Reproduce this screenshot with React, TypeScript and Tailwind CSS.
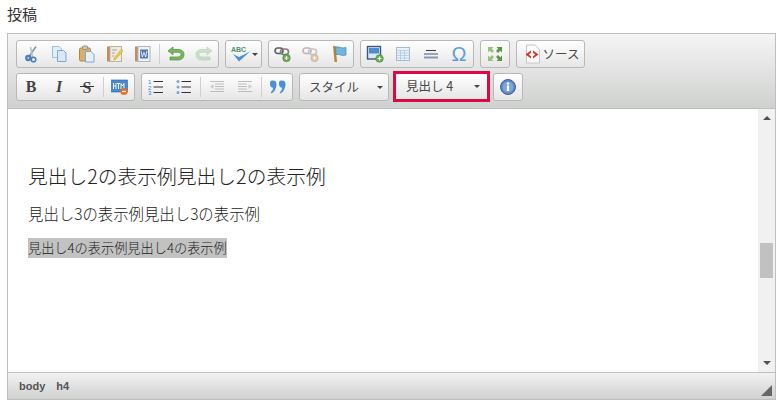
import React from "react";

const Cut = () => (
  <svg width="18" height="18" viewBox="0 0 18 18">
    <path d="M14 1.5 L7.5 11" stroke="#8494a4" strokeWidth="1.5" />
    <path d="M8.5 2 L10.5 12" stroke="#b3bcc6" strokeWidth="1.5" />
    <circle cx="6.3" cy="13" r="3.2" fill="#4a80b6" />
    <circle cx="6.3" cy="13" r="1" fill="#bcd3e8" />
    <circle cx="11.5" cy="14.5" r="2.3" fill="none" stroke="#4a80b6" strokeWidth="1.6" />
  </svg>
);

const Copy = () => (
  <svg width="18" height="18" viewBox="0 0 18 18">
    <path d="M2.5 1.5 H9 L11.5 4 V12.5 H2.5 Z" fill="#e2eef9" stroke="#9bbddb" />
    <path d="M7.5 5.5 H13.5 L16 8 V16.5 H7.5 Z" fill="#d8e8f7" stroke="#7ba8cf" />
  </svg>
);

const Paste = () => (
  <svg width="18" height="18" viewBox="0 0 18 18">
    <rect x="1.5" y="3" width="11" height="13" rx="1.5" fill="#dcae68" stroke="#b3833c" />
    <rect x="4.5" y="1" width="5" height="3.5" rx="1" fill="#cfc9bb" stroke="#978d78" />
    <path d="M7.5 6.5 H13 L16 9.5 V17 H7.5 Z" fill="#e6f0fa" stroke="#7ba8cf" />
  </svg>
);

const PasteText = () => (
  <svg width="18" height="18" viewBox="0 0 18 18">
    <rect x="1" y="1.5" width="3" height="15" fill="#c08a62" />
    <rect x="4" y="1.5" width="11.5" height="15" fill="#f0ebdf" stroke="#bcb19d" />
    <path d="M6 5 H11 M6 8 H9 M6 11 H8" stroke="#a7a7a7" />
    <path d="M15.5 4 L8.5 12.5 L7.5 15 L10 14 L17 6 Z" fill="#eccb52" stroke="#cfa43a" strokeWidth="0.6" />
  </svg>
);

const Word = () => (
  <svg width="18" height="18" viewBox="0 0 18 18">
    <rect x="1" y="1.5" width="3" height="15" fill="#c48c66" />
    <rect x="4" y="1.5" width="12" height="15" fill="#eef1f6" stroke="#adb6c9" />
    <rect x="6" y="4.5" width="8" height="9" fill="#5678b8" />
    <path d="M7 6 L8.3 12 L10 7.5 L11.7 12 L13 6" stroke="#ffffff" strokeWidth="0.8" fill="none" />
  </svg>
);

const Undo = ({ flip, color, edge }: any) => (
  <svg width="18" height="18" viewBox="0 0 18 18" className={flip ? "-scale-x-100" : ""}>
    <path
      d="M6 2 V4.5 H11 C15 4.5 17 6.5 17 9.5 C17 12.7 15 15 11 15 H3 V12 H11 C12.8 12 14 11 14 9.5 C14 8.1 12.8 7.3 11 7.3 H6 V9.8 L1 5.9 Z"
      fill={color}
      stroke={edge}
      strokeWidth="0.7"
    />
  </svg>
);

const Spell = () => (
  <svg width="21" height="18" viewBox="0 0 21 18">
    <text x="1" y="6.5" fontSize="7" fontWeight="700" fill="#4f9163" fontFamily="Liberation Sans">ABC</text>
    <path d="M3 9 L9 16.5 L20 6.5 L9 12 Z" fill="#4a90d4" />
  </svg>
);

const LinkIcon = ({ faded, badge }: any) => (
  <svg width="18" height="18" viewBox="0 0 18 18" opacity={faded ? 0.4 : 1}>
    <rect x="1" y="3" width="8" height="5.5" rx="2.7" fill="none" stroke="#5d5d5d" strokeWidth="1.7" />
    <rect x="6.5" y="4" width="8" height="5.5" rx="2.7" fill="none" stroke="#808080" strokeWidth="1.7" />
    <circle cx="12.5" cy="13" r="3.8" fill={badge} stroke="#4a7c35" strokeWidth="0.5" />
    <path d="M10.5 13 H14.5 M12.5 11 V15" stroke="#ffffff" strokeWidth="1.2" />
  </svg>
);

const Anchor = () => (
  <svg width="18" height="18" viewBox="0 0 18 18">
    <path d="M3 1 L5.5 1 L7 17 L4.5 17 Z" fill="#bd8438" />
    <path d="M5.5 2 C9 1 11 4 16 2.5 V10 C11 11.5 9 8.5 6 9.5 Z" fill="#74b6de" stroke="#3d85b3" strokeWidth="0.7" />
  </svg>
);

const ImageIcon = () => (
  <svg width="18" height="18" viewBox="0 0 18 18">
    <rect x="1.5" y="1.5" width="13" height="12.5" fill="#dce8f4" stroke="#3f5877" strokeWidth="1.4" />
    <rect x="3" y="3" width="10" height="5.5" fill="#4a8fcb" />
    <circle cx="13.5" cy="13.5" r="3.8" fill="#68ae50" stroke="#3f7c2d" strokeWidth="0.5" />
    <path d="M11.5 13.5 H15.5 M13.5 11.5 V15.5" stroke="#ffffff" strokeWidth="1.2" />
  </svg>
);

const TableIcon = () => (
  <svg width="18" height="18" viewBox="0 0 18 18">
    <rect x="2.5" y="2.5" width="13" height="13" fill="#eaf2fa" stroke="#9dbcd9" />
    <path d="M2.5 5.5 H15.5 M2.5 8 H15.5 M2.5 10.5 H15.5 M2.5 13 H15.5 M6.5 5.5 V15.5 M10.5 5.5 V15.5" stroke="#adc6de" strokeWidth="0.8" />
  </svg>
);

const Rule = () => (
  <svg width="18" height="18" viewBox="0 0 18 18">
    <path d="M4 5.5 H14" stroke="#444" strokeWidth="1.1" />
    <path d="M2 9 H16" stroke="#5a6f86" strokeWidth="1.2" />
    <path d="M2 12.5 H16" stroke="#7f9cb8" strokeWidth="2" />
  </svg>
);

const Maximize = () => (
  <svg width="18" height="18" viewBox="0 0 18 18" fill="#6aa84f">
    <path d="M2 2 H7.5 L5.8 3.8 L8 6 L6 8 L3.8 5.8 L2 7.5 Z" fill="#94c47a" />
    <path d="M16 2 V7.5 L14.2 5.8 L12 8 L10 6 L12.2 3.8 L10.5 2 Z" fill="#5c9544" />
    <path d="M2 16 V10.5 L3.8 12.2 L6 10 L8 12 L5.8 14.2 L7.5 16 Z" fill="#94c47a" />
    <path d="M16 16 H10.5 L12.2 14.2 L10 12 L12 10 L14.2 12.2 L16 10.5 Z" fill="#5c9544" />
  </svg>
);

const Source = () => (
  <svg width="20" height="20" viewBox="0 0 20 20">
    <path d="M4.5 1 H13 L17.5 5.5 V19 H4.5 Z" fill="#fbfbfb" stroke="#c6c6c6" />
    <path d="M9 6.5 L3.5 10.5 L9 14.5 V12.2 L6.7 10.5 L9 8.8 Z" fill="#d8322a" />
    <path d="M11 6.5 L16.5 10.5 L11 14.5 V12.2 L13.3 10.5 L11 8.8 Z" fill="#d8322a" />
  </svg>
);

const Html = () => (
  <svg width="18" height="18" viewBox="0 0 18 18">
    <rect x="0.5" y="2" width="16" height="12" fill="#4a88cc" stroke="#2c619e" strokeWidth="0.6" />
    <path d="M2.5 5 V11 M5 5 V11 M2.5 8 H5 M6 5.5 H9 M7.5 5.5 V11 M10 11 V5.5 L11.5 8 L13 5.5 V11" stroke="#ffffff" strokeWidth="0.9" fill="none" />
    <circle cx="13" cy="13.5" r="3.6" fill="#e8702a" />
    <path d="M11 13.5 H15" stroke="#ffffff" strokeWidth="1.2" />
  </svg>
);

const ListNum = () => (
  <svg width="18" height="18" viewBox="0 0 18 18">
    <text x="1" y="6" fontSize="6" fill="#3c82c8" fontFamily="Liberation Sans">1</text>
    <text x="1" y="11.5" fontSize="6" fill="#3c82c8" fontFamily="Liberation Sans">2</text>
    <text x="1" y="17" fontSize="6" fill="#3c82c8" fontFamily="Liberation Sans">3</text>
    <path d="M6.5 3.5 H16 M6.5 9 H16 M6.5 14.5 H16" stroke="#333" strokeWidth="1.1" />
  </svg>
);

const ListBullet = () => (
  <svg width="18" height="18" viewBox="0 0 18 18">
    <circle cx="3" cy="3.5" r="1.5" fill="#7aa6cf" />
    <circle cx="3" cy="9" r="1.5" fill="#7aa6cf" />
    <circle cx="3" cy="14.5" r="1.5" fill="#7aa6cf" />
    <path d="M6.5 3.5 H16 M6.5 9 H16 M6.5 14.5 H16" stroke="#333" strokeWidth="1.1" />
  </svg>
);

const Indent = ({ flip }: any) => (
  <svg width="18" height="18" viewBox="0 0 18 18" className={flip ? "-scale-x-100" : ""}>
    <path d="M2 3.5 H16 M7 6 H16 M7 8.5 H16 M7 11 H16 M2 13.5 H16" stroke="#bdbdbd" strokeWidth="1" />
    <path d="M5.5 6 L2 8.5 L5.5 11 Z" fill="#c3ced8" />
  </svg>
);

const Quote = () => (
  <svg width="18" height="18" viewBox="0 0 18 18" fill="#4a90d9">
    <path d="M1 4.5 C1 3 2.3 2.5 4 2.5 C6 2.5 7.5 3.5 7.5 6 C7.5 10 5.5 14 2.5 15.5 L1.8 14.5 C3.3 13 4 11.5 4.1 9.8 C2.3 9.8 1 8 1 6 Z" />
    <path d="M10 4.5 C10 3 11.3 2.5 13 2.5 C15 2.5 16.5 3.5 16.5 6 C16.5 10 14.5 14 11.5 15.5 L10.8 14.5 C12.3 13 13 11.5 13.1 9.8 C11.3 9.8 10 8 10 6 Z" />
  </svg>
);

const Info = () => (
  <svg width="18" height="18" viewBox="0 0 18 18">
    <circle cx="9" cy="9" r="7.5" fill="#5b86c4" stroke="#3d639c" />
    <circle cx="9" cy="9" r="5.5" fill="#7ea4d8" />
    <circle cx="9" cy="5.5" r="1.2" fill="#ffffff" />
    <rect x="7.9" y="7.5" width="2.2" height="5.5" fill="#ffffff" />
  </svg>
);

const Btn = ({ children }: any) => (
  <div className="flex h-[26px] w-[28px] items-center justify-center">{children}</div>
);

const Sep = () => (
  <div className="flex h-[26px] w-[5px] items-center justify-center">
    <div className="h-[20px] w-px bg-[#cfcfcf]" />
  </div>
);

const Group = ({ children, className = "" }: any) => (
  <div
    className={`flex h-[28px] items-center rounded-[3px] border border-[#b8b8b8] bg-gradient-to-b from-[#ffffff] to-[#e6e6e6] ${className}`}
  >
    {children}
  </div>
);

const Caret = () => (
  <div className="h-0 w-0 border-x-[3px] border-t-[3px] border-x-transparent border-t-[#444]" />
);

export default function App() {
  return (
    <div className="h-[412px] w-[783px] overflow-hidden bg-white px-[7px] pt-[4px] font-['Noto_Sans_CJK_JP','Liberation_Sans',sans-serif]">
      <div className="h-[29px] text-[15px] leading-[20px] text-[#333]">投稿</div>
      <div className="flex h-[367px] w-[769px] flex-col border border-[#bfbfbf]">
        <div className="flex h-[75px] shrink-0 flex-col gap-[5px] border-b border-[#bfbfbf] bg-gradient-to-b from-[#f5f5f5] to-[#cfd1cf] pl-[8px] pt-[6px]">
          <div className="flex gap-[6px]">
            <Group>
              <Btn><Cut /></Btn>
              <Btn><Copy /></Btn>
              <Btn><Paste /></Btn>
              <Btn><PasteText /></Btn>
              <Btn><Word /></Btn>
              <Sep />
              <Btn><Undo color="#78b662" edge="#4d8f38" /></Btn>
              <Btn><div className="opacity-40"><Undo flip color="#8fc08a" edge="#6ea36a" /></div></Btn>
            </Group>
            <Group className="w-[37px] justify-center gap-[1px]">
              <Spell />
              <Caret />
            </Group>
            <Group>
              <Btn><LinkIcon badge="#62a84a" /></Btn>
              <Btn><LinkIcon faded badge="#d9773a" /></Btn>
              <Btn><Anchor /></Btn>
            </Group>
            <Group>
              <Btn><ImageIcon /></Btn>
              <Btn><TableIcon /></Btn>
              <Btn><Rule /></Btn>
              <Btn><span className="font-['Liberation_Sans',sans-serif] text-[20px] leading-none text-[#5b9bdc]">Ω</span></Btn>
            </Group>
            <Group className="w-[30px] justify-center">
              <Maximize />
            </Group>
            <Group className="w-[69px] justify-center gap-[1px]">
              <Source />
              <span className="text-[12.5px] text-[#484848]">ソース</span>
            </Group>
          </div>
          <div className="flex">
            <Group>
              <Btn><span className="font-['Liberation_Serif',serif] text-[16px] font-bold text-[#444]">B</span></Btn>
              <Btn><span className="font-['Liberation_Serif',serif] text-[16px] font-bold italic text-[#444]">I</span></Btn>
              <Btn>
                <div className="relative">
                  <span className="font-['Liberation_Serif',serif] text-[16px] font-bold text-[#444]">S</span>
                  <div className="absolute left-[-3px] right-[-3px] top-[12px] h-px bg-[#333]" />
                </div>
              </Btn>
              <Sep />
              <Btn><Html /></Btn>
            </Group>
            <Group className="ml-[6px]">
              <Btn><ListNum /></Btn>
              <Btn><ListBullet /></Btn>
              <Sep />
              <Btn><Indent /></Btn>
              <Btn><Indent flip /></Btn>
              <Sep />
              <Btn><Quote /></Btn>
            </Group>
            <Group className="ml-[6px] w-[90px] justify-between pl-[9px] pr-[5px]">
              <span className="text-[12.5px] text-[#484848]">スタイル</span>
              <Caret />
            </Group>
            <div className="ml-[7px] mt-[1px] flex h-[25px] w-[91px] items-center justify-between bg-gradient-to-b from-[#ffffff] to-[#e6e6e6] pl-[10px] pr-[7px] outline-[3px] outline-[#dc0a44] outline-solid">
              <span className="text-[12.5px] text-[#484848]">見出し 4</span>
              <Caret />
            </div>
            <Group className="ml-[6px] w-[30px] justify-center">
              <Info />
            </Group>
          </div>
        </div>
        <div className="flex min-h-0 flex-1">
          <div className="flex-1 bg-white pl-[20px] pt-[52px]">
            <div className="text-[19.75px] font-light leading-[30px] text-[#222]">見出し2の表示例見出し2の表示例</div>
            <div className="mt-[10px] text-[15.4px] font-light leading-[24px] text-[#222]">見出し3の表示例見出し3の表示例</div>
            <div className="mt-[9px]">
              <span className="inline-block bg-[#c2c2c2] text-[13.2px] font-light leading-[20px] text-[#222]">見出し4の表示例見出し4の表示例</span>
            </div>
          </div>
          <div className="flex w-[17px] flex-col items-center bg-[#f1f1f1] py-[7px]">
            <div className="h-0 w-0 border-x-[4px] border-b-[4px] border-x-transparent border-b-[#505050]" />
            <div className="mt-[123px] h-[35px] w-[13px] bg-[#c1c1c1]" />
            <div className="mt-auto h-0 w-0 border-x-[4px] border-t-[4px] border-x-transparent border-t-[#505050]" />
          </div>
        </div>
        <div className="flex h-[27px] shrink-0 items-center justify-between border-t border-[#bfbfbf] bg-gradient-to-b from-[#f2f2f2] to-[#cfd1cf] pl-[11px] pr-[3px]">
          <div className="flex gap-[11px] font-['Liberation_Sans',sans-serif] text-[11px] font-bold text-[#555]">
            <span>body</span>
            <span>h4</span>
          </div>
          <div className="mb-[3px] mt-auto h-0 w-0 border-b-[11px] border-l-[11px] border-b-[#666] border-l-transparent" />
        </div>
      </div>
    </div>
  );
}
